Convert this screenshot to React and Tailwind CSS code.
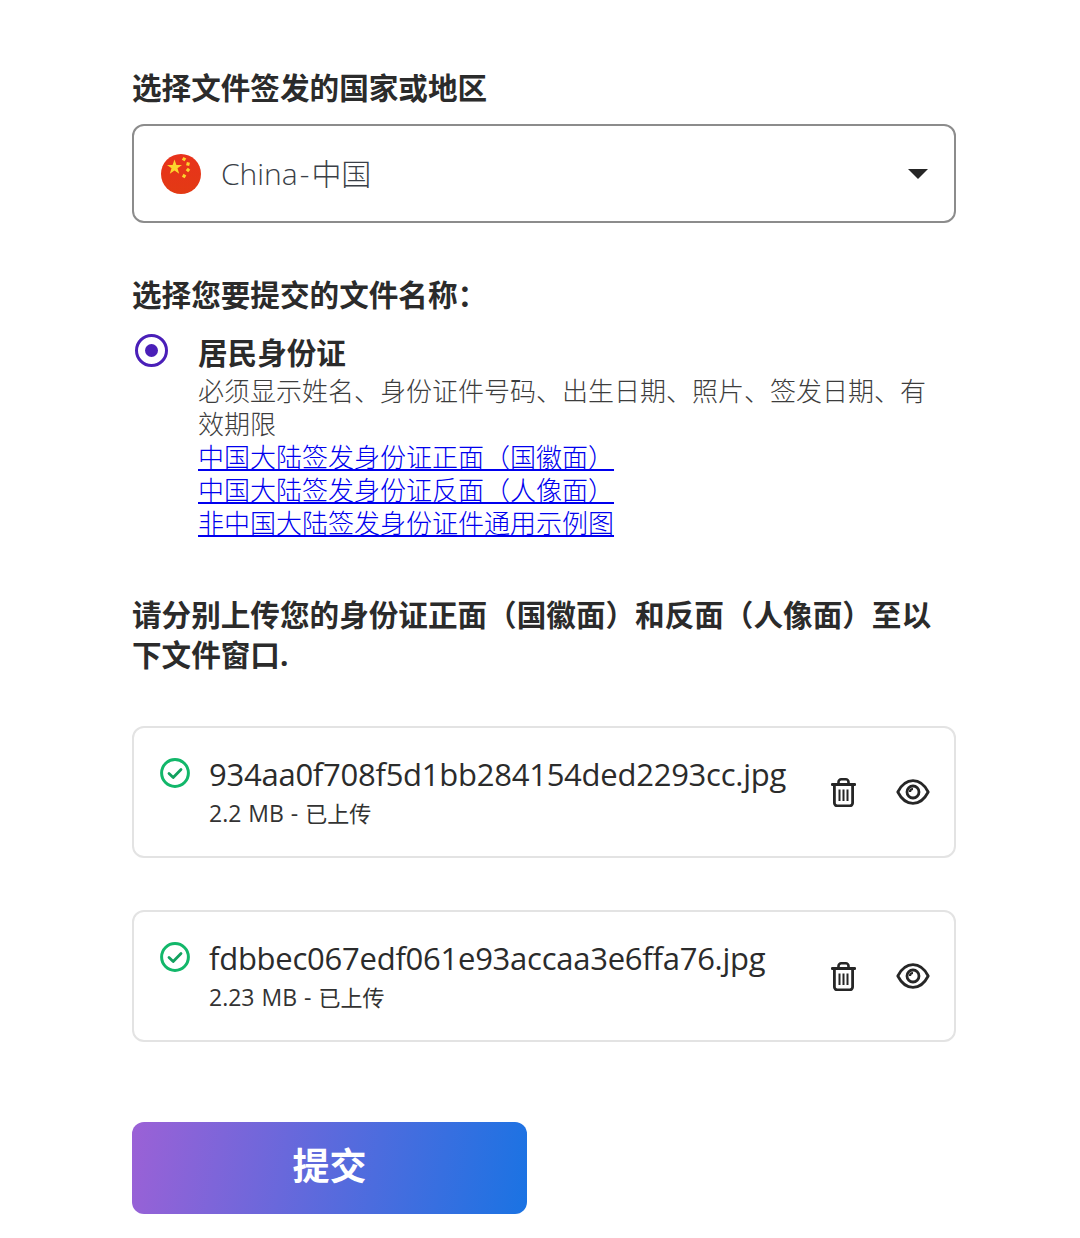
const SANS = "font-['Open_Sans','Noto_Sans_CJK_SC',sans-serif]";

const FILES = [
  { name: '934aa0f708f5d1bb284154ded2293cc.jpg', size: '2.2 MB', status: '已上传' },
  { name: 'fdbbec067edf061e93accaa3e6ffa76.jpg', size: '2.23 MB', status: '已上传' },
];

const LINKS = [
  '中国大陆签发身份证正面（国徽面）',
  '中国大陆签发身份证反面（人像面）',
  '非中国大陆签发身份证件通用示例图',
];

function ChinaFlag() {
  return (
    <svg width="40" height="40" viewBox="0 0 40 40" className="shrink-0">
      <defs>
        <linearGradient id="flagFill" x1="0" y1="0" x2="0" y2="1">
          <stop offset="0" stopColor="#e8321c" />
          <stop offset="1" stopColor="#e33a14" />
        </linearGradient>
      </defs>
      <circle cx="20" cy="20" r="20" fill="url(#flagFill)" />
      <polygon points="13.500,5.500 15.400,11 21,11 16.500,14.300 18.200,19.800 13.500,16.500 8.800,19.800 10.500,14.300 6,11 11.600,11" fill="#fcd52d" />
      <rect x="21.500" y="3.500" width="3.200" height="3.200" fill="#fcd52d" transform="rotate(30 23 5)" />
      <rect x="25.400" y="8.400" width="3.200" height="3.200" fill="#fcd52d" transform="rotate(15 27 10)" />
      <rect x="25.400" y="14.400" width="3.200" height="3.200" fill="#fcd52d" transform="rotate(40 27 16)" />
      <rect x="21.500" y="20.400" width="3.200" height="3.200" fill="#fcd52d" transform="rotate(30 23 22)" />
    </svg>
  );
}

function CheckIcon() {
  return (
    <svg width="30" height="30" viewBox="0 0 30 30" fill="none" className="shrink-0">
      <circle cx="15" cy="15" r="13.400" stroke="#12b76a" strokeWidth="3" />
      <path d="M9 15.500l4.200 4L21 11.500" stroke="#12a15f" strokeWidth="2.800" strokeLinecap="round" strokeLinejoin="round" />
    </svg>
  );
}

function TrashIcon() {
  return (
    <svg width="25" height="29" viewBox="0 0 25 29" fill="none" stroke="#262626" strokeLinecap="round" strokeLinejoin="round">
      <path d="M1.200 6.500h22.600" strokeWidth="2.800" />
      <path d="M7.500 6V4a2.700 2.700 0 012.700-2.700h4.600A2.700 2.700 0 0117.500 4v2" strokeWidth="2.600" />
      <path d="M3.400 7v18a2.800 2.800 0 002.800 2.800h12.600a2.800 2.800 0 002.800-2.800V7" strokeWidth="2.800" />
      <path d="M8.500 11.500v11.500M12.500 11.500v11.500M16.500 11.500v11.500" strokeWidth="2" strokeLinecap="butt" />
    </svg>
  );
}

function EyeIcon() {
  return (
    <svg width="34" height="26" viewBox="0 0 34 26" fill="none">
      <path d="M1.800 13C5.500 5.800 10.800 1.700 17 1.700s11.500 4.100 15.200 11.300C28.500 20.200 23.200 24.300 17 24.300S5.500 20.200 1.800 13z" stroke="#262626" strokeWidth="2.800" strokeLinejoin="round" />
      <circle cx="17" cy="13" r="6" stroke="#262626" strokeWidth="2.800" />
      <path d="M17 10a3 3 0 00-3 3" stroke="#262626" strokeWidth="2.200" />
    </svg>
  );
}

function FileCard({ file }) {
  return (
    <div className="h-[132px] rounded-xl border-2 border-[#e3e3e3] flex items-center pl-[26px] pr-[24px]">
      <div className="flex-1 min-w-0 flex gap-[19px] -mt-[4px]">
        <div className="pt-[6px]">
          <CheckIcon />
        </div>
        <div>
          <p className="text-[31px] leading-[44px] text-[#2b2b2b] tracking-[-0.25px]">{file.name}</p>
          <p className="mt-[1px] text-[22px] leading-[32px] text-[#333333] [word-spacing:1px]">
            <span className="text-[23px]">{file.size} - </span>
            {file.status}
          </p>
        </div>
      </div>
      <div className="flex items-center gap-[40px]">
        <TrashIcon />
        <EyeIcon />
      </div>
    </div>
  );
}

export default function App() {
  return (
    <div className={`${SANS} min-h-screen bg-white pl-[132px] pr-[124px] pt-[68px] pb-[24px] text-[#2b2b2b]`}>
      <h2 className="text-[29.6px] leading-[40px] font-bold">选择文件签发的国家或地区</h2>

      <div className="mt-[16px] h-[99px] rounded-xl border-2 border-[#8c8c8c] flex items-center pl-[27px] pr-[26px]">
        <ChinaFlag />
        <span className="ml-[20px] flex-1 text-[30px] font-light text-[#3a3f47]">
          China<span className="mx-[2px]">-</span>中国
        </span>
        <span className="w-0 h-0 border-x-[10px] border-x-transparent border-t-[10px] border-t-[#262626]" />
      </div>

      <h2 className="mt-[52px] text-[29.6px] leading-[40px] font-bold">选择您要提交的文件名称：</h2>

      <div className="mt-[18px] flex">
        <div className="w-[66px] shrink-0 pl-[3px] pt-[1px]">
          <div className="w-[33px] h-[33px] rounded-full border-[3.5px] border-[#4a1fb8] flex items-center justify-center">
            <div className="w-[13px] h-[13px] rounded-full bg-[#4a1fb8]" />
          </div>
        </div>
        <div className="flex-1 min-w-0 pr-[28px] text-[26px] leading-[33px]">
          <p className="text-[29.6px] leading-[40px] font-bold">居民身份证</p>
          <p className="mt-[2px] text-[#3d3d3d] font-light">必须显示姓名、身份证件号码、出生日期、照片、签发日期、有效期限</p>
          {LINKS.map((link) => (
            <a key={link} href="#" className="block w-fit text-[#0000ee] underline font-light">
              {link}
            </a>
          ))}
        </div>
      </div>

      <h2 className="mt-[55px] text-[29.6px] leading-[40px] font-bold">
        请分别上传您的身份证正面（国徽面）和反面（人像面）至以下文件窗口.
      </h2>

      <div className="mt-[51px] flex flex-col gap-[52px]">
        {FILES.map((file) => (
          <FileCard key={file.name} file={file} />
        ))}
      </div>

      <button className="mt-[80px] w-[395px] h-[92px] pb-[4px] rounded-xl bg-[linear-gradient(100deg,#9b61d6,#1a73e3)] text-white text-[37px] font-bold flex items-center justify-center">
        提交
      </button>
    </div>
  );
}
